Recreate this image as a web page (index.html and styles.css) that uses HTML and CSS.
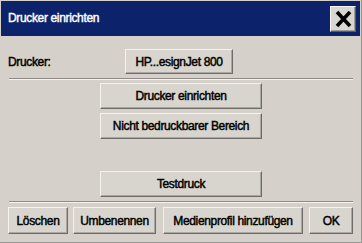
FILE: index.html
```html
<!DOCTYPE html>
<html>
<head>
	<meta charset="utf-8">
	<title>Drucker einrichten</title>
	<link rel="stylesheet" href="styles.css">
</head>
<body>
	<div class="dialog">
		<div class="title_bar">
			<span class="title">Drucker einrichten</span>
			<div class="close_btn">
				<svg width="17" height="18" viewBox="0 0 17 18">
					<path d="M2 2 L15 16 M15 2 L2 16" stroke="#000" stroke-width="3.6" fill="none"/>
				</svg>
			</div>
		</div>
		<div class="printer_row">
			<span class="label">Drucker:</span>
			<div class="btn btn_printer">HP...esignJet 800</div>
		</div>
		<div class="separator sep_top"></div>
		<div class="col_buttons">
			<div class="btn btn_wide btn_setup">Drucker einrichten</div>
			<div class="btn btn_wide btn_area">Nicht bedruckbarer Bereich</div>
			<div class="btn btn_wide btn_test">Testdruck</div>
		</div>
		<div class="separator sep_bottom"></div>
		<div class="bottom_row">
			<div class="btn btn_delete">Löschen</div>
			<div class="btn btn_rename">Umbenennen</div>
			<div class="btn btn_profile">Medienprofil hinzufügen</div>
			<div class="btn btn_ok">OK</div>
		</div>
	</div>
</body>
</html>
```

FILE: styles.css
```css
body {
	margin: 0;
	background-color: #d5d1ca;
	font-family: "Liberation Sans", Arial, sans-serif;
	font-size: 12px;
	letter-spacing: -0.35px;
	color: #000;
}
.dialog {
	width: 362px;
	height: 243px;
	box-sizing: border-box;
	background-color: #d5d1ca;
	border-right: 1px solid #9a9792;
	border-bottom: 1px solid #9a9792;
	overflow: hidden;
}
.title_bar {
	margin: 1px 1px 0 1px;
	height: 35px;
	background-color: #0c236c;
	display: flex;
	align-items: center;
	justify-content: space-between;
	padding: 0 4px 0 7px;
}
.title {
	color: #fff;
	-webkit-text-stroke: 0.4px #fff;
	padding-bottom: 1px;
}
.close_btn {
	width: 26px;
	height: 26px;
	box-sizing: border-box;
	background-color: #d9d6d0;
	border: 1px solid;
	border-color: #f6f5f2 #5c5b58 #5c5b58 #f6f5f2;
	box-shadow: inset -1px -1px 0 #a09d98;
	display: flex;
	align-items: center;
	justify-content: center;
	margin-top: 1px;
}
.btn {
	box-sizing: border-box;
	background-color: #d8d5cf;
	border: 1px solid;
	border-color: #f3f2ef #6e6c69 #6e6c69 #f3f2ef;
	box-shadow: inset -1px -1px 0 #aaa7a2;
	display: flex;
	align-items: center;
	justify-content: center;
	-webkit-text-stroke: 0.45px #000;
	white-space: nowrap;
}
.printer_row {
	display: flex;
	align-items: center;
	margin-top: 13px;
	padding-left: 8px;
}
.label {
	width: 117px;
	-webkit-text-stroke: 0.45px #000;
}
.btn_printer {
	width: 108px;
	height: 25px;
}
.separator {
	margin: 0 8px 0 9px;
	border-top: 1px solid #8e8b86;
	border-bottom: 1px solid #f4f3f0;
}
.sep_top {
	margin-top: 4px;
}
.col_buttons {
	margin-left: 100px;
	width: 162px;
	display: flex;
	flex-direction: column;
}
.btn_wide {
	height: 26px;
}
.btn_setup {
	margin-top: 3px;
}
.btn_area {
	margin-top: 4px;
}
.btn_test {
	margin-top: 32px;
}
.sep_bottom {
	margin-top: 4px;
}
.bottom_row {
	display: flex;
	margin: 4px 0 0 8px;
	height: 27px;
}
.bottom_row .btn {
	height: 27px;
}
.btn_delete {
	width: 60px;
}
.btn_rename {
	width: 83px;
	margin-left: 5px;
}
.btn_profile {
	width: 140px;
	margin-left: 7px;
}
.btn_ok {
	width: 44px;
	margin-left: 6px;
}
```
